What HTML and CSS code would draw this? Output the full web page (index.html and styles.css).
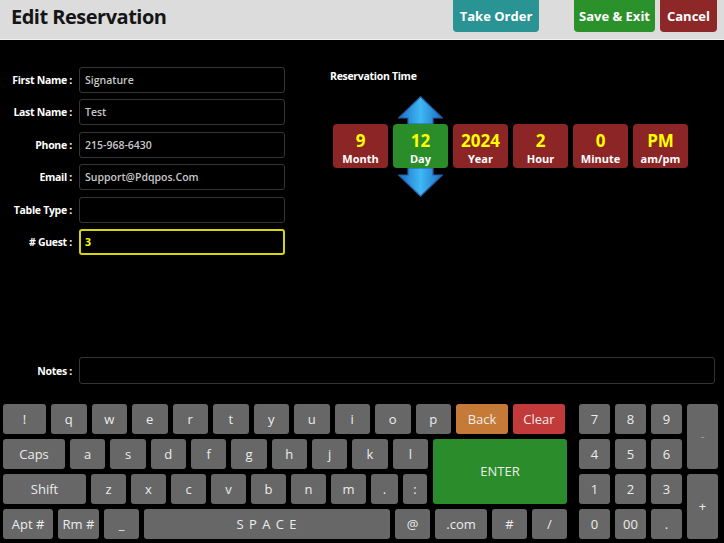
FILE: index.html
```html
<!DOCTYPE html>
<html>
<head>
<meta charset="utf-8">
<link rel="stylesheet" href="styles.css">
</head>
<body>
<div class="header">
  <h1 class="title">Edit Reservation</h1>
  <button class="hbtn take">Take Order</button>
  <button class="hbtn save">Save &amp; Exit</button>
  <button class="hbtn cancel">Cancel</button>
</div>

<div class="content">
  <div class="form">
    <div class="frow"><span class="flabel">First Name :</span><div class="finput">Signature</div></div>
    <div class="frow"><span class="flabel">Last Name :</span><div class="finput">Test</div></div>
    <div class="frow"><span class="flabel">Phone :</span><div class="finput">215-968-6430</div></div>
    <div class="frow"><span class="flabel">Email :</span><div class="finput">Support@Pdqpos.Com</div></div>
    <div class="frow"><span class="flabel">Table Type :</span><div class="finput"></div></div>
    <div class="frow"><span class="flabel"># Guest :</span><div class="finput active">3</div></div>
  </div>
  <div class="time">
    <div class="tlabel">Reservation Time</div>
    <div class="tboxes">
      <div class="tbox"><div class="tnum">9</div><div class="tname">Month</div></div>
      <div class="tbox sel">
        <svg class="arrow up" width="45" height="28" viewBox="0 0 45 28">
          <defs>
            <linearGradient id="ag" x1="0" y1="0" x2="1" y2="0">
              <stop offset="0" stop-color="#1a6fc4"/>
              <stop offset="0.5" stop-color="#3fb8f4"/>
              <stop offset="1" stop-color="#1a6fc4"/>
            </linearGradient>
          </defs>
          <path d="M22.5 0.7 L44.3 22 L35 22 L35 28 L10 28 L10 22 L0.7 22 Z" fill="url(#ag)" stroke="#2a5ea6" stroke-width="1.2"/>
        </svg>
        <div class="tnum">12</div><div class="tname">Day</div>
        <svg class="arrow down" width="45" height="29" viewBox="0 0 45 29">
          <path d="M10 0 L35 0 L35 7 L44.3 7 L22.5 28.3 L0.7 7 L10 7 Z" fill="url(#ag)" stroke="#2a5ea6" stroke-width="1.2"/>
        </svg>
      </div>
      <div class="tbox"><div class="tnum">2024</div><div class="tname">Year</div></div>
      <div class="tbox"><div class="tnum">2</div><div class="tname">Hour</div></div>
      <div class="tbox"><div class="tnum">0</div><div class="tname">Minute</div></div>
      <div class="tbox"><div class="tnum">PM</div><div class="tname">am/pm</div></div>
    </div>
  </div>
</div>

<div class="frow notes"><span class="flabel">Notes :</span><div class="finput wide"></div></div>

<div class="kb">
  <div class="kb-main">
    <div class="krow">
      <button class="key w43">!</button>
      <button class="key l">q</button><button class="key l">w</button><button class="key l">e</button><button class="key l">r</button><button class="key l">t</button><button class="key l">y</button><button class="key l">u</button><button class="key l">i</button><button class="key l">o</button><button class="key l">p</button>
      <button class="key w52 back">Back</button>
      <button class="key w52 clear">Clear</button>
    </div>
    <div class="mid">
      <div class="mid-keys">
        <div class="krow">
          <button class="key w62">Caps</button>
          <button class="key f">a</button><button class="key f">s</button><button class="key f">d</button><button class="key f">f</button><button class="key f">g</button><button class="key f">h</button><button class="key f">j</button><button class="key f">k</button><button class="key f">l</button>
        </div>
        <div class="krow">
          <button class="key w83">Shift</button>
          <button class="key w35">z</button><button class="key w35">x</button><button class="key w35">c</button><button class="key w35">v</button><button class="key w35">b</button><button class="key w35">n</button><button class="key w35">m</button>
          <button class="key w27">.</button><button class="key w24">:</button>
        </div>
      </div>
      <button class="key enter">ENTER</button>
    </div>
    <div class="krow">
      <button class="key w50">Apt #</button>
      <button class="key w41">Rm #</button>
      <button class="key w35">_</button>
      <button class="key space">S P A C E</button>
      <button class="key w35">@</button>
      <button class="key w52">.com</button>
      <button class="key w35">#</button>
      <button class="key w35">/</button>
    </div>
  </div>
  <div class="numpad">
    <button class="key">7</button><button class="key">8</button><button class="key">9</button><button class="key tall minus">-</button>
    <button class="key">4</button><button class="key">5</button><button class="key">6</button>
    <button class="key">1</button><button class="key">2</button><button class="key">3</button><button class="key tall">+</button>
    <button class="key">0</button><button class="key">00</button><button class="key">.</button>
  </div>
</div>
</body>
</html>
```

FILE: styles.css
```css
* { box-sizing: border-box; }

body {
  margin: 0;
  width: 724px;
  height: 543px;
  overflow: hidden;
  background: #000;
  font-family: "Open Sans", sans-serif;
  color: #fff;
}

button {
  font-family: inherit;
  border: none;
  padding: 0;
  margin: 0;
  cursor: pointer;
}

/* Header */
.header {
  height: 40px;
  background: #dcdcdc;
  border-bottom: 1px solid #f0f0f0;
  display: flex;
  align-items: flex-start;
  padding: 0 7px 0 11px;
}

.title {
  flex: 1;
  margin: 0;
  font-size: 20px;
  font-weight: 700;
  letter-spacing: -0.5px;
  line-height: 34px;
  color: #151515;
}

.hbtn {
  height: 36px;
  margin-top: -4px;
  padding-top: 4px;
  border-radius: 4px;
  color: #fff;
  font-size: 13px;
  font-weight: 700;
  line-height: 32px;
}

.take { width: 86px; background: #2a9393; margin-right: 35px; }
.save { width: 81px; background: #2b912b; margin-right: 5px; }
.cancel { width: 57px; background: #8e2828; }

/* Content */
.content {
  display: flex;
  height: 317px;
  padding-top: 27px;
}

.form {
  display: flex;
  flex-direction: column;
  gap: 6.4px;
  width: 285px;
}

.frow {
  display: flex;
  align-items: center;
  height: 26px;
}

.flabel {
  width: 79px;
  padding-right: 7px;
  text-align: right;
  font-size: 10.5px;
  font-weight: 700;
  letter-spacing: -0.3px;
  color: #fff;
  white-space: nowrap;
}

.finput {
  width: 206px;
  height: 26px;
  border: 1px solid #353535;
  border-radius: 3px;
  padding-left: 5px;
  display: flex;
  align-items: center;
  font-size: 10.5px;
  font-weight: 600;
  color: #c8c8c8;
}

.finput.active {
  border: 2px solid #d6d600;
  padding-left: 4px;
  color: #ffff00;
  font-weight: 700;
}

.notes { height: 27px; }
.finput.wide { width: 636px; height: 27px; }

/* Reservation time */
.time {
  margin-left: 45px;
}

.tlabel {
  margin-top: 0;
  line-height: 18px;
  font-size: 10.5px;
  font-weight: 700;
  letter-spacing: -0.3px;
}

.tboxes {
  display: flex;
  gap: 5px;
  margin-top: 39px;
  padding-left: 3px;
}

.tbox {
  position: relative;
  width: 55px;
  height: 44px;
  border-radius: 4px;
  background: #8c2626;
  text-align: center;
  padding-top: 6px;
}

.tbox.sel { background: #2a8d2a; }

.tnum {
  position: relative;
  color: #ffff00;
  font-size: 17px;
  font-weight: 700;
  line-height: 22px;
}

.tname {
  position: relative;
  color: #fff;
  font-size: 11px;
  font-weight: 700;
  line-height: 14px;
}

.arrow {
  position: absolute;
  left: 5px;
  display: block;
}

.arrow.up { top: -28px; }
.arrow.down { top: 44px; }

/* Keyboard */
.kb {
  display: flex;
  gap: 12px;
  margin-top: 20px;
  padding-left: 3px;
}

.kb-main {
  width: 564px;
  display: flex;
  flex-direction: column;
  gap: 5px;
}

.krow {
  display: flex;
  gap: 5px;
  height: 30px;
}

.mid {
  display: flex;
  gap: 5px;
}

.mid-keys {
  width: 425px;
  display: flex;
  flex-direction: column;
  gap: 5px;
}

.key {
  height: 30px;
  border-radius: 3px;
  background: #676767;
  color: #ececec;
  font-size: 13px;
  font-weight: 500;
  line-height: 30px;
  text-align: center;
  flex: none;
}

.l { width: 35.5px; }
.f { flex: 1; }
.w24 { width: 24px; }
.w27 { width: 27px; }
.w35 { width: 35px; }
.w41 { width: 41px; }
.w43 { width: 43px; }
.w50 { width: 50px; }
.w52 { width: 52px; }
.w62 { width: 62px; }
.w83 { width: 83px; }

.space { flex: 1; letter-spacing: 1px; }

.back { background: #c67a37; }
.clear { background: #c23a3a; }

.enter {
  width: 134px;
  height: 65px;
  background: #2a8c2a;
  line-height: 65px;
}

.numpad {
  display: grid;
  grid-template-columns: repeat(4, 31px);
  grid-auto-rows: 30px;
  gap: 5px;
}

.numpad .key { width: 31px; }

.numpad .tall {
  grid-row: span 2;
  height: 65px;
  line-height: 65px;
}

.minus { color: #9a9a9a; }
```
